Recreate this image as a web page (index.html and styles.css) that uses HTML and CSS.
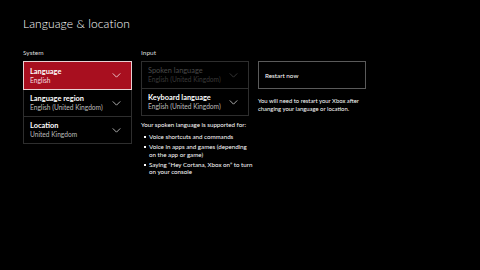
FILE: index.html
```html
<!DOCTYPE html>
<html lang="en">
<head>
<meta charset="utf-8">
<title>Language &amp; location</title>
<link rel="stylesheet" href="styles.css">
</head>
<body>
<div class="page">
  <h1 class="title">Language &amp; location</h1>
  <div class="cols">
    <section class="col">
      <div class="section-label">System</div>
      <div class="list">
        <div class="item focused">
          <div class="texts"><div class="name">Language</div><div class="value">English</div></div>
          <svg class="chev" viewBox="0 0 10 6"><path d="M0.5 0.5 L5 5 L9.5 0.5" fill="none" stroke="currentColor" stroke-width="1.1"/></svg>
        </div>
        <div class="item">
          <div class="texts"><div class="name">Language region</div><div class="value">English (United Kingdom)</div></div>
          <svg class="chev" viewBox="0 0 10 6"><path d="M0.5 0.5 L5 5 L9.5 0.5" fill="none" stroke="currentColor" stroke-width="1.1"/></svg>
        </div>
        <div class="item">
          <div class="texts"><div class="name">Location</div><div class="value">United Kingdom</div></div>
          <svg class="chev" viewBox="0 0 10 6"><path d="M0.5 0.5 L5 5 L9.5 0.5" fill="none" stroke="currentColor" stroke-width="1.1"/></svg>
        </div>
      </div>
    </section>
    <section class="col">
      <div class="section-label">Input</div>
      <div class="list">
        <div class="item disabled">
          <div class="texts"><div class="name">Spoken language</div><div class="value">English (United Kingdom)</div></div>
          <svg class="chev" viewBox="0 0 10 6"><path d="M0.5 0.5 L5 5 L9.5 0.5" fill="none" stroke="currentColor" stroke-width="1.1"/></svg>
        </div>
        <div class="item">
          <div class="texts"><div class="name">Keyboard language</div><div class="value">English (United Kingdom)</div></div>
          <svg class="chev" viewBox="0 0 10 6"><path d="M0.5 0.5 L5 5 L9.5 0.5" fill="none" stroke="currentColor" stroke-width="1.1"/></svg>
        </div>
      </div>
      <p class="note">Your spoken language is supported for:</p>
      <ul class="bullets">
        <li>Voice shortcuts and commands</li>
        <li>Voice in apps and games (depending<br>on the app or game)</li>
        <li>Saying “Hey Cortana, Xbox on” to turn<br>on your console</li>
      </ul>
    </section>
    <section class="col third">
      <div class="button">Restart now</div>
      <p class="note">You will need to restart your Xbox after<br>changing your language or location.</p>
    </section>
  </div>
</div>
</body>
</html>
```
FILE: styles.css
```css
html, body {
  margin: 0;
  padding: 0;
  background: #000;
}
body {
  width: 480px;
  height: 270px;
  overflow: hidden;
  color: #fff;
  font-family: "Lato", "Noto Sans", sans-serif;
}
.page {
  padding: 15px 23px 0 23px;
}
.title {
  margin: 0;
  font-size: 12px;
  font-weight: 300;
  line-height: 18px;
  letter-spacing: 0.1px;
}
.cols {
  margin-top: 15px;
  display: grid;
  grid-template-columns: 109px 108px 108px;
  column-gap: 9px;
  align-items: start;
}
.section-label {
  font-size: 6.5px;
  line-height: 9px;
  height: 9px;
  color: #ddd;
}
.list {
  margin-top: 4px;
  display: flex;
  flex-direction: column;
}
.item {
  box-sizing: border-box;
  height: 27px;
  border: 1px solid #2e2e2e;
  border-top: none;
  display: flex;
  align-items: center;
  justify-content: space-between;
  padding: 0 6px 0 6px;
  color: #bbb;
  white-space: nowrap;
}
.item:first-child {
  border-top: 1px solid #2e2e2e;
  height: 28px;
}
.item.focused {
  background: #a80f1f;
  border: 1px solid #e8d0d3;
  height: 29px;
  color: #f0d0d4;
}
.texts {
  display: flex;
  flex-direction: column;
}
.name {
  font-size: 7.4px;
  line-height: 9px;
  font-weight: 700;
  color: #fff;
}
.value {
  font-size: 6.6px;
  line-height: 9px;
  color: #bdbdbd;
}
.focused .value {
  color: #f4dde0;
}
.disabled .name {
  color: #4a4a4a;
  font-weight: 400;
}
.disabled .value {
  color: #3a3a3a;
}
.disabled {
  color: #3a3a3a;
}
.chev {
  width: 9px;
  height: 5px;
  margin-right: 4px;
}
.note {
  margin: 5px 0 0 0;
  font-size: 6.2px;
  line-height: 7.5px;
  color: #fff;
  white-space: nowrap;
}
.bullets {
  margin: 4.5px 0 0 0;
  padding: 0 0 0 8px;
  font-size: 6.2px;
  line-height: 7.5px;
  list-style: none;
  white-space: nowrap;
}
.bullets li {
  position: relative;
  margin-bottom: 2.5px;
}
.bullets li::before {
  content: "";
  position: absolute;
  left: -5px;
  top: 3px;
  width: 2px;
  height: 2px;
  background: #fff;
}
.third {
  padding-top: 13px;
}
.button {
  box-sizing: border-box;
  height: 28px;
  border: 1px solid #5a5a5a;
  display: flex;
  align-items: center;
  padding-left: 6px;
  font-size: 6.3px;
}
.third .note {
  margin-top: 8px;
  font-size: 5.9px;
}
```
